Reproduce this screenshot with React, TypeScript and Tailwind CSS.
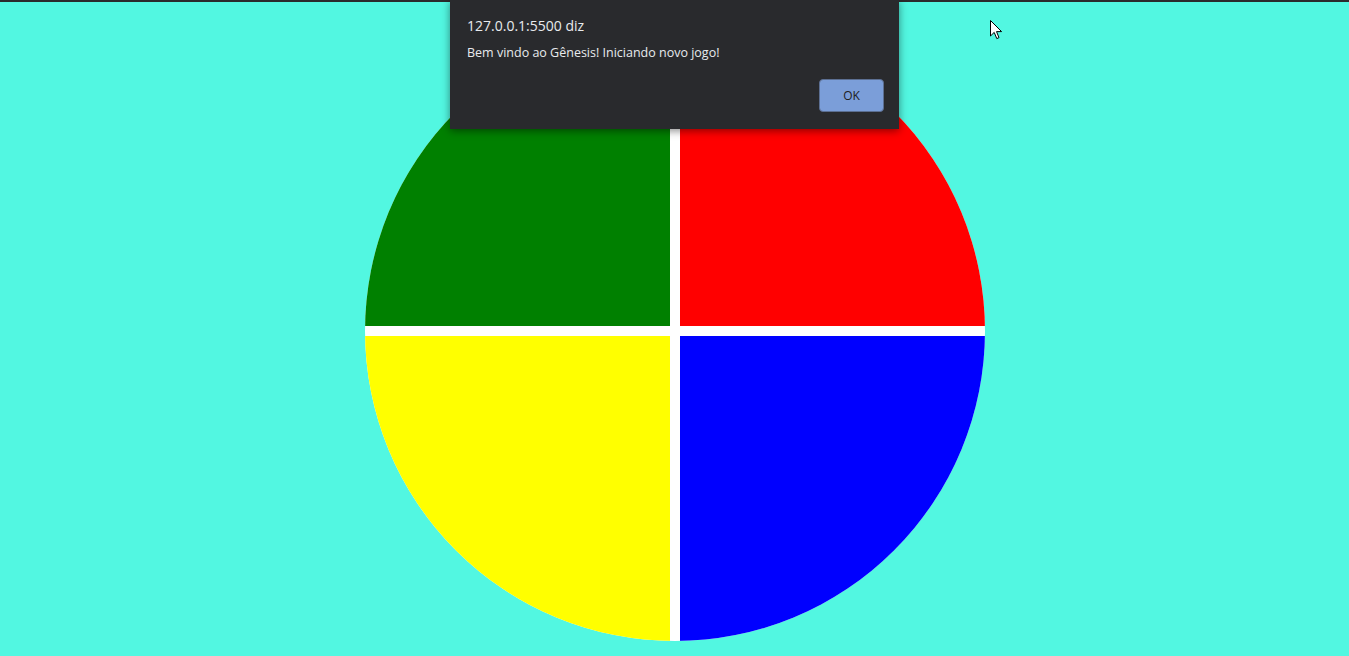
export default function App() {
  return (
    <div className="relative h-[656px] w-full overflow-hidden bg-[#52f7e1]">
      <div className="h-[2px] w-full bg-[#2b2b2d]" />

      <div className="flex justify-center pt-[19px]">
        <div className="grid h-[620px] w-[620px] grid-cols-2 grid-rows-2 gap-[10px] overflow-hidden rounded-full bg-white">
          <div className="bg-[#008000]" />
          <div className="bg-[#ff0000]" />
          <div className="bg-[#ffff00]" />
          <div className="bg-[#0000ff]" />
        </div>
      </div>

      {/* alert dialog */}
      <div
        className="absolute left-[450px] top-0 h-[129px] w-[449px] bg-[#292a2d] text-[#e8eaed] shadow-[0_2px_8px_rgba(0,0,0,0.45)]"
        style={{ fontFamily: '"Open Sans", "Noto Sans", sans-serif' }}
      >
        <div className="pl-[17px] pt-[16px] text-[14px] leading-[20px]">127.0.0.1:5500 diz</div>
        <div className="pl-[17px] pt-[9px] text-[12.5px] leading-[16px]">
          Bem vindo ao Gênesis! Iniciando novo jogo!
        </div>
        <div className="flex justify-end pr-[15px] pt-[18px]">
          <button className="h-[33px] w-[65px] rounded-[4px] border border-[#5c6f92] bg-[#7b9ed9] text-[12px] text-[#202124]">
            OK
          </button>
        </div>
      </div>

      {/* mouse cursor */}
      <svg className="absolute left-[990px] top-[20px]" width="13" height="21" viewBox="0 0 13 21">
        <path
          d="M0.5 0.5 L0.5 16 L4.2 12.4 L6.8 18.6 L9 17.6 L6.5 11.6 L11.6 11.6 Z"
          fill="#ffffff"
          stroke="#000000"
          strokeWidth="1"
          strokeLinejoin="round"
        />
      </svg>
    </div>
  );
}
